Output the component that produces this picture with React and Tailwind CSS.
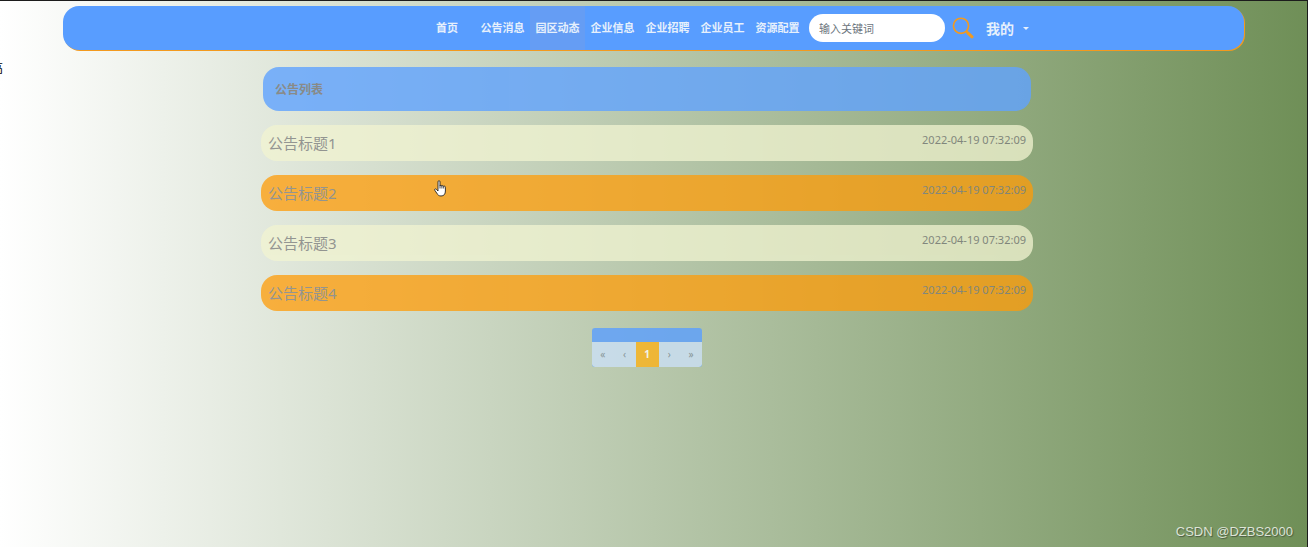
const links = ['公告消息', '园区动态', '企业信息', '企业招聘', '企业员工', '资源配置'];

const notices = [
  { id: 1, title: '公告标题1', time: '2022-04-19 07:32:09' },
  { id: 2, title: '公告标题2', time: '2022-04-19 07:32:09' },
  { id: 3, title: '公告标题3', time: '2022-04-19 07:32:09' },
  { id: 4, title: '公告标题4', time: '2022-04-19 07:32:09' },
];

function SearchIcon() {
  return (
    <svg viewBox="0 0 22 22" className="size-[22px]" fill="none" stroke="#f39a1e" aria-hidden="true">
      <circle cx="9" cy="8.800" r="7.600" strokeWidth="1.600" />
      <path d="M14.300 14.300 16 16" strokeWidth="1.800" />
      <path d="M15.800 15.800 20 19.800" strokeWidth="3" strokeLinecap="round" />
    </svg>
  );
}

function NavBar() {
  return (
    <nav className="mx-[63px] flex h-11 items-center justify-end rounded-2xl bg-[#589dff] pr-[215px] text-[11px] font-bold text-[#e6f0fc] shadow-[1px_1px_0_#f39a1e]">
      <a href="#home" className="mr-3 flex h-full items-center px-[5px]">首页</a>
      {links.map((label) => (
        <a
          key={label}
          href="#section"
          className={`flex h-full items-center justify-center whitespace-nowrap w-[55px] ${label === '园区动态' ? 'bg-[#659df4]' : ''}`}
        >
          {label}
        </a>
      ))}
      <form className="ml-1 flex items-center gap-[7px]" onSubmit={(e) => e.preventDefault()}>
        <input
          type="text"
          aria-label="输入关键词"
          placeholder="输入关键词"
          className="h-7 w-[136px] rounded-full bg-white px-[10px] text-[11px] font-normal text-[#555] placeholder:text-[#6c757d]"
        />
        <button type="submit" aria-label="搜索" className="block">
          <SearchIcon />
        </button>
      </form>
      <button type="button" className="ml-3 flex items-center gap-[9px] text-[14px] font-bold">
        我的
        <svg viewBox="0 0 6 3" className="h-[3px] w-[6px]" fill="currentColor" aria-hidden="true">
          <path d="M0 0h6L3 3z" />
        </svg>
      </button>
    </nav>
  );
}

function Pagination() {
  return (
    <div className="mt-[17px] w-[110px] self-center overflow-hidden rounded-[3px] bg-[#5b9fff] pt-[14px] opacity-80">
      <div className="flex h-[25px] rounded-b-[3px] bg-[#cbe0f6] text-[10px] text-[#7d8a94]">
        <button type="button" aria-label="首页" className="flex-1">«</button>
        <button type="button" aria-label="上一页" className="flex-1">‹</button>
        <button type="button" aria-current="page" className="w-[23px] bg-[#fcb31a] font-bold text-white">1</button>
        <button type="button" aria-label="下一页" className="flex-1">›</button>
        <button type="button" aria-label="末页" className="flex-1">»</button>
      </div>
    </div>
  );
}

function HandCursor() {
  return (
    <svg viewBox="0 0 12 17" className="absolute left-[173px] top-[5px] h-[17px] w-3" aria-hidden="true">
      <path
        d="M4 9.5V1.8C4 .3 6 .3 6 1.8V6c.3-1.1 1.8-1 1.9.2.3-1 1.700-.9 1.800.4.500-.8 1.700-.5 1.700.7V11c0 3-1.400 5-4.400 5-2.200 0-3.300-1.200-4.200-2.800L.8 10.300C.2 9.100 1.500 8.300 2.400 9.300L4 11z"
        fill="#fff"
        stroke="#222"
        strokeWidth=".9"
        strokeLinejoin="round"
      />
      <path d="M6 5.500v3M7.900 6v2.500M9.700 6.500v2" stroke="#222" strokeWidth=".8" />
    </svg>
  );
}

export default function App() {
  return (
    <div className="relative flex min-h-screen flex-col overflow-hidden border-r border-t border-[#1c1c1c] bg-linear-to-r/srgb from-white to-[#6f8f57] pt-[5px] font-['Noto_Sans','Noto_Sans_CJK_SC',sans-serif]">
      <NavBar />
      <span className="absolute -left-[9px] top-[60px] text-[12px] leading-4 text-black">高</span>

      <main className="mt-[17px] flex w-full flex-col pr-[13px]">
        <div className="mx-auto flex w-full max-w-[772px] flex-col">
          <h1 className="mx-[2px] h-11 rounded-2xl bg-[#60a3ff] px-3 text-[12px] leading-[46px] font-bold text-[#747474] opacity-80">
            公告列表
          </h1>
          <ul className="mt-[14px] flex flex-col gap-[14px]">
            {notices.map((n, i) => (
              <li key={n.id} className="relative">
                <a
                  href="#notice"
                  className={`flex h-9 items-start justify-between rounded-2xl px-[7px] text-[#7a7a7a] opacity-75 ${i % 2 ? 'bg-[#ff9c08]' : 'bg-[#f2f4d1]'}`}
                >
                  <span className="text-[15px] leading-9">{n.title}</span>
                  <time className="text-[11px] leading-[30px]">{n.time}</time>
                </a>
                {n.id === 2 && <HandCursor />}
              </li>
            ))}
          </ul>
          <Pagination />
        </div>
      </main>

      <p className="absolute bottom-[7px] right-[14px] font-['Liberation_Sans',sans-serif] text-[13px] leading-4 text-[#dde3d6] [text-shadow:1px_1px_1px_#4a5a40]">
        CSDN @DZBS2000
      </p>
    </div>
  );
}
